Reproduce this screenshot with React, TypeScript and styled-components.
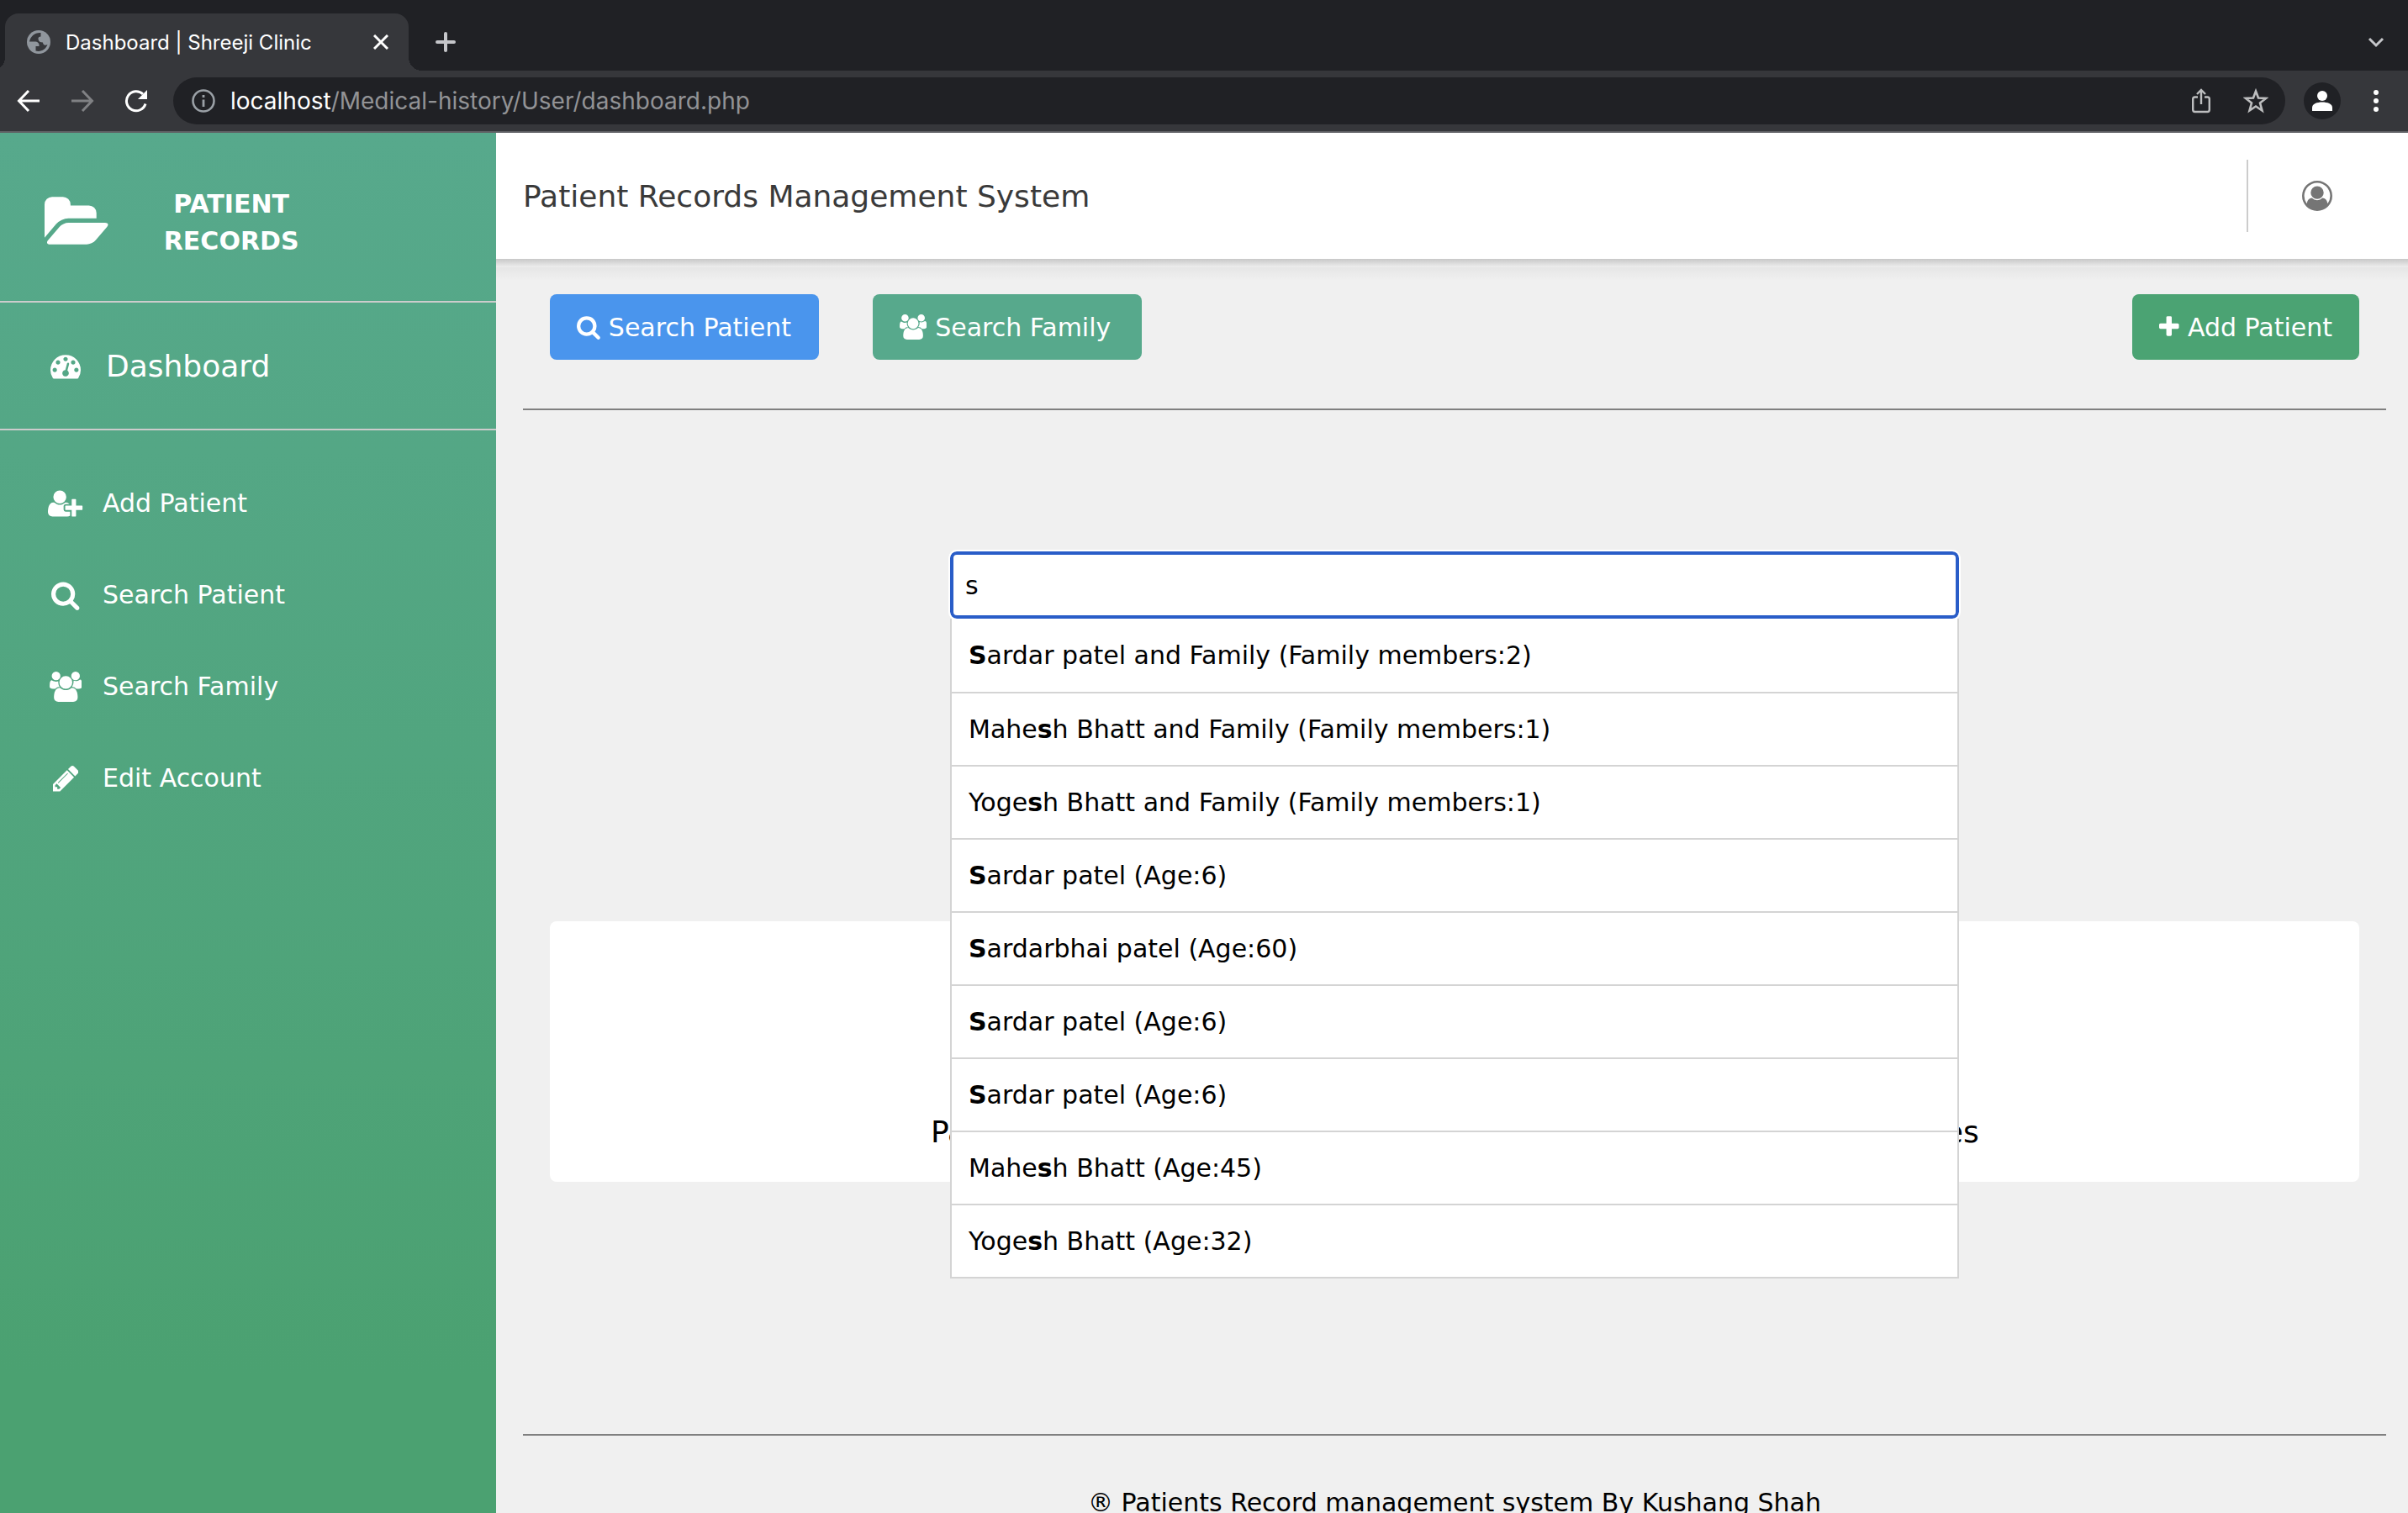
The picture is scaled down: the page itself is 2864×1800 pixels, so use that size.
import React, { useState } from "react";
import styled, { createGlobalStyle } from "styled-components";

const GlobalStyle = createGlobalStyle`
  *, *::before, *::after { box-sizing: border-box; }
  body {
    margin: 0;
    overflow: hidden;
    font-family: Verdana, "DejaVu Sans", sans-serif;
    font-size: 30px;
    color: #000;
    background: #f0f0f0;
  }
  button, input { font: inherit; color: inherit; }
  a { color: inherit; text-decoration: none; }
  ul { list-style: none; margin: 0; padding: 0; }
  svg { display: block; flex: none; }
`;

/* ---------- icons ---------- */

const glyphs = {
  search: {
    box: [64, 1664],
    d: "M1216 832q0-185-131.5-316.5t-316.5-131.5-316.5 131.5-131.5 316.5 131.5 316.5 316.5 131.5 316.5-131.5 131.5-316.5zm512 832q0 52-38 90t-90 38q-54 0-90-38l-343-342q-179 124-399 124-143 0-273.5-55.5t-225-150-150-225-55.5-273.5 55.5-273.5 150-225 225-150 273.5-55.5 273.5 55.5 225 150 150 225 55.5 273.5q0 220-124 399l343 343q37 37 37 90z",
  },
  plus: {
    box: [192, 1408],
    d: "M1600 736v192q0 40-28 68t-68 28h-416v416q0 40-28 68t-68 28h-192q-40 0-68-28t-28-68v-416h-416q-40 0-68-28t-28-68v-192q0-40 28-68t68-28h416v-416q0-40 28-68t68-28h192q40 0 68 28t28 68v416h416q40 0 68 28t28 68z",
  },
  pencil: {
    box: [128, 1536],
    d: "M491 1536l91-91-235-235-91 91v107h128v128h107zm523-928q0-22-22-22-10 0-17 7l-542 542q-7 7-7 17 0 22 22 22 10 0 17-7l542-542q7-7 7-17zm-54-192l416 416-832 832h-416v-416zm683 96q0 53-37 90l-166 166-416-416 166-165q36-38 90-38 53 0 91 38l235 234q37 39 37 91z",
  },
  users: {
    box: [-64, 1920],
    d: "M529 896q-162 5-265 128h-134q-82 0-138-40.5t-56-118.5q0-353 124-353 6 0 43.5 21t97.5 42.5 119 21.5q67 0 133-23-5 37-5 66 0 159 93 290zm1071 637q0 120-73 189.5t-194 69.5h-874q-121 0-194-69.5t-73-189.5q0-53 3.5-103.5t14-109 26.5-108.5 43-97.5 62-81 85.5-53.5 111.5-20q10 0 43 21.5t73 48 107 48 135 21.5 135-21.5 107-48 73-48 43-21.5q61 0 111.5 20t85.5 53.5 62 81 43 97.5 26.5 108.5 14 109 3.5 103.5zm-1024-1277q0 106-75 181t-181 75-181-75-75-181 75-181 181-75 181 75 75 181zm704 384q0 159-112.5 271.5t-271.5 112.5-271.5-112.5-112.5-271.5 112.5-271.5 271.5-112.5 271.5 112.5 112.5 271.5zm576 225q0 78-56 118.5t-138 40.5h-134q-103-123-265-128 93-131 93-290 0-29-5-66 66 23 133 23 59 0 119-21.5t97.5-42.5 43.5-21q124 0 124 353zm-128-609q0 106-75 181t-181 75-181-75-75-181 75-181 181-75 181 75 75 181z",
  },
  userPlus: {
    box: [0, 2048],
    d: "M704 896q-159 0-271.5-112.5t-112.5-271.5 112.5-271.5 271.5-112.5 271.5 112.5 112.5 271.5-112.5 271.5-271.5 112.5zm960 128h352q13 0 22.5 9.5t9.5 22.5v192q0 13-9.5 22.5t-22.5 9.5h-352v352q0 13-9.5 22.5t-22.5 9.5h-192q-13 0-22.5-9.5t-9.5-22.5v-352h-352q-13 0-22.5-9.5t-9.5-22.5v-192q0-13 9.5-22.5t22.5-9.5h352v-352q0-13 9.5-22.5t22.5-9.5h192q13 0 22.5 9.5t9.5 22.5v352zm-736 224q0 52 38 90t90 38h256v238q-68 50-171 50h-874q-121 0-194-69t-73-190q0-53 3.5-103.5t14-109 26.5-108.5 43-97.5 62-81 85.5-53.5 111.5-20q19 0 39 17 79 61 154.5 91.5t164.5 30.5 164.5-30.5 154.5-91.5q20-17 39-17 132 0 217 96h-223q-52 0-90 38t-38 90v192z",
  },
  gauge: {
    box: [0, 1792],
    d: "M384 1152q0-53-37.5-90.5t-90.5-37.5-90.5 37.5-37.5 90.5 37.5 90.5 90.5 37.5 90.5-37.5 37.5-90.5zm192-448q0-53-37.5-90.5t-90.5-37.5-90.5 37.5-37.5 90.5 37.5 90.5 90.5 37.5 90.5-37.5 37.5-90.5zm428 481l101-382q6-26-7.5-48.5t-38.5-29.5-48 6.5-30 39.5l-101 382q-60 5-107 43.5t-63 98.5q-20 77 20 146t117 89 146-20 89-117q16-60-6-117t-72-91zm660-33q0-53-37.5-90.5t-90.5-37.5-90.5 37.5-37.5 90.5 37.5 90.5 90.5 37.5 90.5-37.5 37.5-90.5zm-640-640q0-53-37.5-90.5t-90.5-37.5-90.5 37.5-37.5 90.5 37.5 90.5 90.5 37.5 90.5-37.5 37.5-90.5zm448 192q0-53-37.5-90.5t-90.5-37.5-90.5 37.5-37.5 90.5 37.5 90.5 90.5 37.5 90.5-37.5 37.5-90.5zm320 448q0 261-141 483-19 29-54 29h-1402q-35 0-54-29-141-221-141-483 0-182 71-348t191-286 286-191 348-71 348 71 286 191 191 286 71 348z",
  },
  folderOpen: {
    box: [-64, 1920],
    d: "M1815 952q0 31-31 66l-336 396q-43 51-120.5 86.5t-143.5 35.5h-1088q-34 0-60.5-13t-26.5-43q0-31 31-66l336-396q43-51 120.5-86.5t143.5-35.5h1088q34 0 60.5 13t26.5 43zm-343-344v160h-832q-94 0-197 47.5t-164 119.5l-337 396-5 6q0-4-.5-12.5t-.5-12.5v-960q0-92 66-158t158-66h320q92 0 158 66t66 158v32h544q92 0 158 66t66 158z",
  },
  userCircle: {
    box: [0, 1792],
    d: "M896 0q182 0 348 71t286 191 191 286 71 348q0 181-70.5 347t-190.5 286-286 191.5-349 71.5-349-71-285.5-191.5-190.5-286-71-347.5 71-348 191-286 286-191 348-71zm619 1351q149-205 149-455 0-156-61-298t-164-245-245-164-298-61-298 61-245 164-164 245-61 298q0 250 149 455 66-327 306-327 131 128 313 128t313-128q240 0 306 327zm-235-647q0-159-112.5-271.5t-271.5-112.5-271.5 112.5-112.5 271.5 112.5 271.5 271.5 112.5 271.5-112.5 112.5-271.5z",
  },
};

type GlyphName = keyof typeof glyphs;

const Glyph = ({ name, size }: { name: GlyphName; size: number }) => {
  const { box, d } = glyphs[name];
  return (
    <svg
      aria-hidden="true"
      height={size}
      width={(size * box[1]) / 1792}
      viewBox={`${box[0]} 0 ${box[1]} 1792`}
      fill="currentColor"
    >
      <path d={d} />
    </svg>
  );
};

/* ---------- browser frame ---------- */

const Window = styled.div`
  display: flex;
  flex-direction: column;
  height: 100vh;
`;

const TabStrip = styled.div`
  display: flex;
  align-items: flex-end;
  height: 84px;
  flex: none;
  padding-left: 6px;
  background: #202125;
  font-family: Inter, Roboto, sans-serif;
`;

const Tab = styled.div`
  position: relative;
  display: flex;
  align-items: center;
  gap: 18px;
  width: 480px;
  height: 68px;
  padding: 0 24px 0 26px;
  border-radius: 16px 16px 0 0;
  background: #36373b;
  color: #fff;
  font-size: 24px;

  &::before,
  &::after {
    content: "";
    position: absolute;
    bottom: 0;
    width: 16px;
    height: 16px;
  }
  &::before {
    right: 100%;
    background: radial-gradient(circle at 0 0, transparent 16px, #36373b 16px);
  }
  &::after {
    left: 100%;
    background: radial-gradient(circle at 100% 0, transparent 16px, #36373b 16px);
  }
`;

const TabTitle = styled.span`
  flex: 1;
  white-space: nowrap;
`;

const ChromeButton = styled.button<{ $tone?: string }>`
  display: flex;
  align-items: center;
  justify-content: center;
  padding: 0;
  border: 0;
  background: none;
  color: ${(p) => p.$tone ?? "#fff"};
`;

const NewTab = styled(ChromeButton)`
  height: 68px;
  width: 24px;
  margin-left: 32px;
`;

const TabSearch = styled(ChromeButton)`
  height: 68px;
  margin: 0 28px 0 auto;
`;

const Toolbar = styled.div`
  display: flex;
  align-items: center;
  flex: none;
  height: 74px;
  padding: 0 34px 0 20px;
  border-bottom: 2px solid #5f6064;
  background: #36373b;
`;

const History = styled.div`
  display: flex;
  gap: 36px;
  margin-right: 30px;
`;

const Omnibox = styled.div`
  display: flex;
  flex: 1;
  align-items: center;
  height: 56px;
  padding: 0 20px 0 22px;
  border-radius: 28px;
  background: #202125;
  color: #929396;
  font-family: Inter, Roboto, sans-serif;
  font-size: 28px;
`;

const Address = styled.span`
  flex: 1;
  margin-left: 18px;
`;

const Host = styled.span`
  color: #fff;
`;

const OmniActions = styled.div`
  display: flex;
  gap: 36px;
`;

const Profile = styled.button`
  display: flex;
  align-items: center;
  justify-content: center;
  width: 44px;
  height: 44px;
  margin: 0 38px 0 22px;
  padding: 0;
  border: 0;
  border-radius: 50%;
  background: #202125;
`;

const BrowserFrame = () => (
  <>
    <TabStrip>
      <Tab>
        <svg width="28" height="28" viewBox="0 0 28 28" aria-hidden="true">
          <circle cx="14" cy="14" r="14" fill="#90969d" />
          <path
            d="M16.500 3 C9.500 2.500 4 7.500 3 13.500 L9 13.500 C13 13.500 15 15.500 14.500 19 L10.500 19 L10.500 24.500 C16.500 26 22.500 23 24.500 17 C21.500 18.500 19 17.500 19 14.500 C16 14.500 14 13.500 13.500 10.500 C13.200 8.500 14.500 7.500 16.500 7.500 Z"
            fill="#36373b"
          />
        </svg>
        <TabTitle>Dashboard | Shreeji Clinic</TabTitle>
        <ChromeButton aria-label="Close tab">
          <svg width="18" height="18" viewBox="0 0 18 18" stroke="currentColor" strokeWidth="3">
            <path d="M1 1 L17 17 M17 1 L1 17" />
          </svg>
        </ChromeButton>
      </Tab>
      <NewTab aria-label="New tab" $tone="#c5c6ca">
        <svg width="24" height="24" viewBox="0 0 24 24" stroke="currentColor" strokeWidth="4" strokeLinecap="round">
          <path d="M12 2 V22 M2 12 H22" />
        </svg>
      </NewTab>
      <TabSearch aria-label="Search tabs" $tone="#c5c6ca">
        <svg width="20" height="14" viewBox="0 0 20 14" fill="none" stroke="currentColor" strokeWidth="3">
          <path d="M2 3 L10 11 L18 3" />
        </svg>
      </TabSearch>
    </TabStrip>
    <Toolbar>
      <History>
        <ChromeButton aria-label="Back">
          <svg width="28" height="28" viewBox="0 0 28 28" fill="none" stroke="currentColor" strokeWidth="3">
            <path d="M27 14 H3 M14 2 L2.500 14 L14 26" />
          </svg>
        </ChromeButton>
        <ChromeButton aria-label="Forward" $tone="#808184">
          <svg width="28" height="28" viewBox="0 0 28 28" fill="none" stroke="currentColor" strokeWidth="3">
            <path d="M1 14 H25 M14 2 L25.500 14 L14 26" />
          </svg>
        </ChromeButton>
        <ChromeButton aria-label="Reload">
          <svg width="28" height="28" viewBox="0 0 28 28" fill="none" stroke="currentColor" strokeWidth="3">
            <path d="M22 6 A11.500 11.500 0 1 0 25 17.500" />
            <path d="M27 1 V12 H16 Z" fill="currentColor" stroke="none" />
          </svg>
        </ChromeButton>
      </History>
      <Omnibox>
        <svg width="28" height="28" viewBox="0 0 28 28" fill="none" stroke="#9aa0a6" aria-hidden="true">
          <circle cx="14" cy="14" r="12.500" strokeWidth="2.600" />
          <path d="M14 12.500 V21 M14 7 V10" strokeWidth="2.800" />
        </svg>
        <Address>
          <Host>localhost</Host>/Medical-history/User/dashboard.php
        </Address>
        <OmniActions>
          <ChromeButton aria-label="Share" $tone="#bdbebf">
            <svg width="28" height="32" viewBox="0 0 28 32" fill="none" stroke="currentColor" strokeWidth="2.400">
              <path d="M10 11.500 H6.500 Q4.200 11.500 4.200 13.800 V26.500 Q4.200 29 6.500 29 H21.500 Q23.800 29 23.800 26.500 V13.800 Q23.800 11.500 21.500 11.500 H18 M14 20 V3 M9 8 L14 3 L19 8" />
            </svg>
          </ChromeButton>
          <ChromeButton aria-label="Bookmark this tab" $tone="#bdbebf">
            <svg width="30" height="30" viewBox="0 0 30 30" fill="none" stroke="currentColor" strokeWidth="2.600">
              <path d="M15 3.500 L18 11.500 L27 12 L20 17.500 L22.500 26.500 L15 21.500 L7.500 26.500 L10 17.500 L3 12 L12 11.500 Z" />
            </svg>
          </ChromeButton>
        </OmniActions>
      </Omnibox>
      <Profile aria-label="Profile">
        <svg width="24" height="24" viewBox="0 0 24 24" fill="#fff">
          <circle cx="12" cy="6" r="6" />
          <path d="M0 24 V20 C0 15.500 6 13.500 12 13.500 C18 13.500 24 15.500 24 20 V24 Z" />
        </svg>
      </Profile>
      <ChromeButton aria-label="Menu">
        <svg width="8" height="28" viewBox="0 0 8 28" fill="currentColor">
          <circle cx="4" cy="4" r="3" />
          <circle cx="4" cy="14" r="3" />
          <circle cx="4" cy="24" r="3" />
        </svg>
      </ChromeButton>
    </Toolbar>
  </>
);

/* ---------- page ---------- */

const Page = styled.div`
  display: flex;
  flex: 1;
  min-height: 0;
`;

const Sidebar = styled.aside`
  flex: none;
  width: 590px;
  background: linear-gradient(#57a98c, #4ba171 90%);
  color: #fff;
`;

const Brand = styled.div`
  display: flex;
  align-items: center;
  gap: 64px;
  padding: 63px 32px 49px 53px;
  border-bottom: 2px solid #ccc;
`;

const BrandName = styled.h1`
  width: 162px;
  margin: 0;
  font-size: 30px;
  line-height: 44px;
  text-align: center;
`;

const Slot = styled.span`
  display: flex;
  justify-content: center;
  width: 46px;
`;

const NavHome = styled.a`
  display: flex;
  align-items: center;
  gap: 25px;
  height: 152px;
  padding-left: 55px;
  border-bottom: 2px solid #ccc;
  font-size: 36px;
`;

const NavList = styled.ul`
  && { padding-top: 32px; }
`;

const NavLink = styled.a`
  display: flex;
  align-items: center;
  gap: 21px;
  height: 109px;
  padding-left: 55px;
`;

const Main = styled.main`
  display: flex;
  flex: 1;
  flex-direction: column;
  min-width: 0;
  overflow: hidden;
`;

const TopBar = styled.header`
  display: flex;
  align-items: center;
  justify-content: space-between;
  flex: none;
  height: 150px;
  padding: 0 90px 0 32px;
  background: #fff;
  color: #3a3a3a;
`;

const SystemName = styled.h2`
  margin: 0;
  font-size: 36px;
  font-weight: 400;
`;

const Account = styled.div`
  display: flex;
  align-items: center;
  height: 86px;
  padding-left: 64px;
  border-left: 2px solid #ccc;
`;

const AccountButton = styled.button`
  padding: 0;
  border: 0;
  background: none;
  color: #757575;
`;

const BarShadow = styled.div`
  flex: none;
  height: 26px;
  background: linear-gradient(#c8c8c8, #eeeeee 10px, #e6e6e6 10px, #f0f0f0);
`;

const Content = styled.div`
  padding: 16px 26px 0 32px;
`;

const Actions = styled.div`
  display: flex;
  gap: 64px;
  padding: 0 32px 58px;
  border-bottom: 2px solid #808080;
`;

const ActionButton = styled.button<{ $tone: string; $wide?: boolean }>`
  display: flex;
  align-items: center;
  gap: 10px;
  min-width: ${(p) => (p.$wide ? "320px" : "0")};
  height: 78px;
  margin-left: ${(p) => (p.$wide ? "0" : "auto")};
  padding: 0 32px;
  border: 0;
  border-radius: 8px;
  background: ${(p) => p.$tone};
  color: #fff;
`;

const SearchArea = styled.div`
  position: relative;
  width: 1200px;
  max-width: 100%;
  margin: 168px auto 360px;
`;

const SearchInput = styled.input`
  display: block;
  width: 100%;
  height: 80px;
  padding: 0 14px;
  border: 4px solid #2a5dc8;
  border-radius: 8px;
  outline: 2px solid #fff;
  background: #fff;
`;

const Suggestions = styled.ul`
  position: absolute;
  top: 100%;
  left: 0;
  right: 0;
  border: 2px solid #d4d4d4;
  border-top: 0;
  background: #fff;
`;

const Suggestion = styled.li`
  display: flex;
  align-items: center;
  height: 87px;
  padding: 0 20px;
  white-space: pre;

  & + & {
    border-top: 2px solid #d4d4d4;
  }
`;

const Summary = styled.section`
  display: grid;
  grid-template-columns: 1fr 1fr;
  align-items: end;
  gap: 52px;
  height: 310px;
  margin: 0 32px 300px;
  padding-bottom: 38px;
  border-radius: 8px;
  background: #fff;
  font-size: 36px;
  line-height: 42px;
  text-align: center;
`;

const Footer = styled.footer`
  padding-top: 60px;
  border-top: 2px solid #808080;
  line-height: 40px;
  text-align: center;
`;

const records = [
  "Sardar patel and Family (Family members:2)",
  "Mahesh Bhatt and Family (Family members:1)",
  "Yogesh Bhatt and Family (Family members:1)",
  "Sardar patel (Age:6)",
  "Sardarbhai patel (Age:60)",
  "Sardar patel (Age:6)",
  "Sardar patel (Age:6)",
  "Mahesh Bhatt (Age:45)",
  "Yogesh Bhatt (Age:32)",
];

const navItems: { icon: GlyphName; label: string }[] = [
  { icon: "userPlus", label: "Add Patient" },
  { icon: "search", label: "Search Patient" },
  { icon: "users", label: "Search Family" },
  { icon: "pencil", label: "Edit Account" },
];

/* Shows the first occurrence of the query in bold. */
const Highlight = ({ text, query }: { text: string; query: string }) => {
  const at = text.toLowerCase().indexOf(query.toLowerCase());
  return (
    <span>
      {text.slice(0, at)}
      <b>{text.slice(at, at + query.length)}</b>
      {text.slice(at + query.length)}
    </span>
  );
};

export default function App() {
  const [query, setQuery] = useState("s");
  const matches = query
    ? records.filter((r) => r.toLowerCase().includes(query.toLowerCase()))
    : [];

  return (
    <Window>
      <GlobalStyle />
      <BrowserFrame />
      <Page>
        <Sidebar>
          <Brand>
            <Glyph name="folderOpen" size={72} />
            <BrandName>PATIENT RECORDS</BrandName>
          </Brand>
          <nav>
            <NavHome href="#dashboard">
              <Slot><Glyph name="gauge" size={36} /></Slot>
              Dashboard
            </NavHome>
            <NavList>
              {navItems.map((item) => (
                <li key={item.label}>
                  <NavLink href="#">
                    <Slot><Glyph name={item.icon} size={36} /></Slot>
                    {item.label}
                  </NavLink>
                </li>
              ))}
            </NavList>
          </nav>
        </Sidebar>
        <Main>
          <TopBar>
            <SystemName>Patient Records Management System</SystemName>
            <Account>
              <AccountButton aria-label="Account">
                <Glyph name="userCircle" size={36} />
              </AccountButton>
            </Account>
          </TopBar>
          <BarShadow />
          <Content>
            <Actions>
              <ActionButton $tone="#4a95ed" $wide>
                <Glyph name="search" size={30} />
                Search Patient
              </ActionButton>
              <ActionButton $tone="#57a98c" $wide>
                <Glyph name="users" size={30} />
                Search Family
              </ActionButton>
              <ActionButton $tone="#4ba373">
                <Glyph name="plus" size={30} />
                Add Patient
              </ActionButton>
            </Actions>
            <SearchArea>
              <SearchInput
                type="text"
                aria-label="Search"
                value={query}
                onChange={(e) => setQuery(e.target.value)}
              />
              <Suggestions>
                {matches.map((text, i) => (
                  <Suggestion key={i}>
                    <Highlight text={text} query={query} />
                  </Suggestion>
                ))}
              </Suggestions>
            </SearchArea>
            <Summary>
              <span>Patients</span>
              <span>Families</span>
            </Summary>
            <Footer>® Patients Record management system By Kushang Shah</Footer>
          </Content>
        </Main>
      </Page>
    </Window>
  );
}
